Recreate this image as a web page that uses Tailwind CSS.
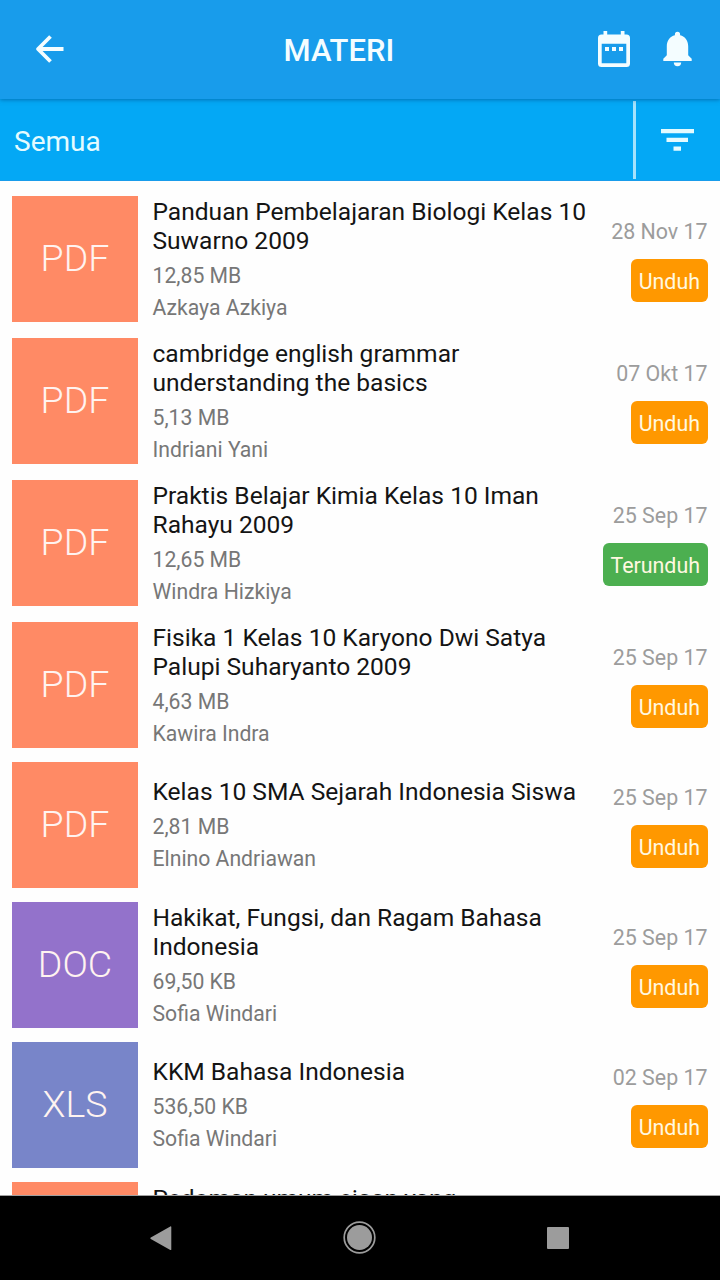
<!DOCTYPE html>
<html lang="id">
<head>
<meta charset="utf-8">
<title>Materi</title>
<script src="https://cdn.jsdelivr.net/npm/@tailwindcss/browser@4"></script>
</head>
<body class="bg-white">
<div class="flex h-[1280px] w-[720px] flex-col overflow-hidden bg-[#fefefe] font-['Roboto',sans-serif]">
  <header class="relative z-10 flex h-[99px] shrink-0 items-center bg-[#189ceb] pb-px pl-[35px] pr-[28px] text-[#f4fdff] shadow-[0_1px_4px_rgba(0,60,120,0.5)]">
    <svg class="h-[28px] w-[30px]" viewBox="0 0 30 28" fill="none" stroke="currentColor" stroke-width="3.8" stroke-linejoin="round"><path d="M15.5 1.500 3 14l12.500 12.500M3 14h25.500"/></svg>
    <h1 class="ml-[218.500px] mt-[3px] text-[31px] font-medium leading-none">MATERI</h1>
    <svg class="ml-auto h-[36px] w-[32px]" viewBox="0 0 32 36"><path fill="currentColor" fill-rule="evenodd" d="M5.500 0h3.700v3.500h13.600V0h3.700v3.500H28.500a3.500 3.500 0 0 1 3.500 3.500v25.500a3.500 3.500 0 0 1-3.500 3.500h-25a3.500 3.500 0 0 1-3.500-3.500V7a3.500 3.500 0 0 1 3.500-3.500h2zM3.700 12.700v19.600h24.600V12.700zM7 16h4v4H7zm7 0h4v4h-4zm7 0h4v4h-4z"/></svg>
    <svg class="ml-[32px] h-[36px] w-[30px]" viewBox="0 0 30 36" fill="currentColor"><path d="M15.500 .8a2.600 2.600 0 0 0-2.600 2.600v.8C7.700 5.500 4.800 9.700 4.800 15.300v9L1.300 27.800v2.300h28.400v-2.300L26.200 24.300v-9c0-5.600-2.900-9.800-8.100-11.100v-.8A2.600 2.600 0 0 0 15.500 .8zM11.800 31.600a3.700 3.700 0 0 0 7.400 0z"/></svg>
  </header>
  <div class="flex h-[82px] shrink-0 items-center border-b border-[#189ceb] bg-[#04a8f5] text-[#e4fbff]">
    <span class="ml-[14px] pt-[4px] text-[28px] leading-none">Semua</span>
    <div class="ml-auto mr-[25px] h-[78px] w-[3px] bg-[#a5e2fc]"></div>
    <svg class="mr-[26px] h-[22px] w-[33px]" viewBox="0 0 33 22" fill="currentColor"><path d="M0 0h33v4.300H0zM5.500 8.700h21.500V13H5.500zM12.500 17.400h7.500v4.300h-7.500z"/></svg>
  </div>
  <main id="list" class="flex min-h-0 flex-1 flex-col overflow-hidden border-b border-[#a0a0a0] pt-[15px]"></main>
  <nav class="flex h-[84px] shrink-0 items-center bg-black text-[#9c9c9c]">
    <svg class="ml-[150px] h-[24px] w-[22px]" viewBox="0 0 22 24" fill="currentColor"><path d="M21.300 1v22.500a.7.7 0 0 1-1 .5L.8 12.900a.8.8 0 0 1 0-1.400L20.300.4a.7.7 0 0 1 1 .6z"/></svg>
    <svg class="ml-[171px] h-[34px] w-[34px]" viewBox="0 0 34 34"><circle cx="16.500" cy="16.500" r="15.300" fill="none" stroke="currentColor" stroke-width="1.700"/><circle cx="16.500" cy="16.500" r="12.500" fill="currentColor"/></svg>
    <div class="ml-[170px] h-[22px] w-[22px] rounded-[1px] bg-current"></div>
  </nav>
</div>
<script>
const P = 'bg-[#ff8a65]', D = 'bg-[#9372cb]', X = 'bg-[#7885c9]';
const rows = [
  ['PDF', P, 'Panduan Pembelajaran Biologi Kelas 10<br>Suwarno 2009', '12,85 MB', 'Azkaya Azkiya', '28 Nov 17', 0, 'mb-[16px]'],
  ['PDF', P, 'cambridge english grammar<br>understanding the basics', '5,13 MB', 'Indriani Yani', '07 Okt 17', 0, 'mb-[16px]'],
  ['PDF', P, 'Praktis Belajar Kimia Kelas 10 Iman<br>Rahayu 2009', '12,65 MB', 'Windra Hizkiya', '25 Sep 17', 1, 'mb-[16px]'],
  ['PDF', P, 'Fisika 1 Kelas 10 Karyono Dwi Satya<br>Palupi Suharyanto 2009', '4,63 MB', 'Kawira Indra', '25 Sep 17', 0, 'mb-[14px]'],
  ['PDF', P, 'Kelas 10 SMA Sejarah Indonesia Siswa', '2,81 MB', 'Elnino Andriawan', '25 Sep 17', 0, 'mb-[14px]'],
  ['DOC', D, 'Hakikat, Fungsi, dan Ragam Bahasa<br>Indonesia', '69,50 KB', 'Sofia Windari', '25 Sep 17', 0, 'mb-[14px]'],
  ['XLS', X, 'KKM Bahasa Indonesia', '536,50 KB', 'Sofia Windari', '02 Sep 17', 0, 'mb-[14px]']
];
document.getElementById('list').innerHTML = rows.map(([type, color, title, size, author, date, done, gap]) => `
  <article class="flex h-[126px] shrink-0 items-center pl-[12px] pr-[12.5px] ${gap}">
    <div class="flex h-[126px] w-[126px] shrink-0 items-center justify-center pb-[2px] text-[37.5px] font-light text-[#fff3f0] ${color}">${type}</div>
    <div class="ml-[14.5px] flex flex-1 flex-col whitespace-nowrap pt-[2px] text-[21.2px] leading-[32px] text-[#777]">
      <h2 class="mb-[5px] text-[24.55px] leading-[29px] text-[#141414]">${title}</h2>
      <p>${size}</p>
      <p>${author}</p>
    </div>
    <div class="flex flex-col items-end text-[21.4px]">
      <time class="mb-[14px] mt-[1px] pt-px leading-[26px] text-[#9c9c9c]">${date}</time>
      <button class="h-[43px] rounded-[6px] px-[7.500px] pt-[3px] leading-[40px] text-[#fff8e0] ${done ? 'bg-[#4caf50]' : 'bg-[#ff9800]'}">${done ? 'Terunduh' : 'Unduh'}</button>
    </div>
  </article>`).join('') + `
  <article class="flex h-[126px] shrink-0 items-start pl-[12px]">
    <div class="h-[126px] w-[126px] shrink-0 ${P}"></div>
    <h2 class="ml-[14.5px] pt-[2px] text-[24.5px] leading-[29px] text-[#141414]">Pedoman umum ejaan yang</h2>
  </article>`;
</script>
</body>
</html>
